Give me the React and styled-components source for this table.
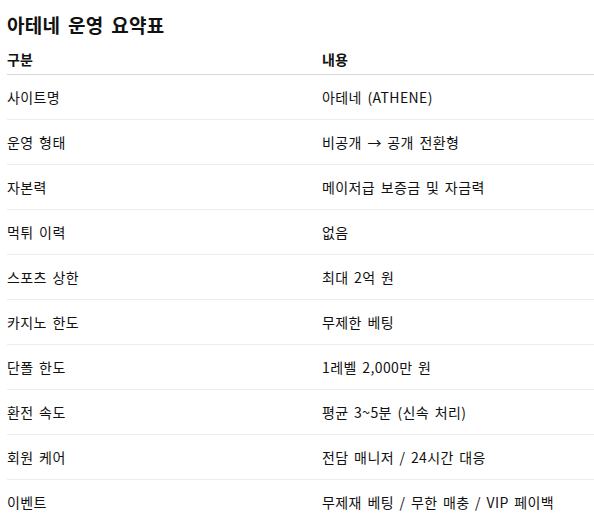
import React from 'react';
import styled, { createGlobalStyle } from 'styled-components';

const GlobalStyle = createGlobalStyle`
	body {
		margin: 0;
		background: #ffffff;
		color: #111111;
		font-family: 'Noto Sans CJK KR', 'Noto Sans', sans-serif;
		overflow: hidden;
	}
`;

const Page = styled.div`
	padding-left: 7px;
	width: 600px;
`;

const Title = styled.h2`
	margin: 13px 0 7px;
	font-size: 19px;
	line-height: 23px;
	font-weight: 700;
	letter-spacing: 0.3px;
	word-spacing: 3px;
`;

const Table = styled.div`
	display: grid;
	grid-template-columns: 315px 1fr;
`;

const HeadCell = styled.div`
	height: 31px;
	display: flex;
	align-items: center;
	font-size: 14px;
	font-weight: 700;
	border-bottom: 1px solid #d9d9d9;
`;

const Cell = styled.div`
	height: 44px;
	display: flex;
	align-items: center;
	font-size: 14px;
	line-height: 20px;
	letter-spacing: 0.4px;
	word-spacing: 2px;
	white-space: pre;
	border-bottom: 1px solid ${p => (p.$last ? 'transparent' : '#ececec')};
`;

const rows = [
	['사이트명', '아테네 (ATHENE)'],
	['운영 형태', '비공개 → 공개 전환형'],
	['자본력', '메이저급 보증금 및 자금력'],
	['먹튀 이력', '없음'],
	['스포츠 상한', '최대 2억 원'],
	['카지노 한도', '무제한 베팅'],
	['단폴 한도', '1레벨 2,000만 원'],
	['환전 속도', '평균 3~5분 (신속 처리)'],
	['회원 케어', '전담 매니저 / 24시간 대응'],
	['이벤트', '무제재 베팅 / 무한 매충 / VIP 페이백']
];

const App = () => (
	<Page>
		<GlobalStyle />
		<Title>아테네 운영 요약표</Title>
		<Table>
			<HeadCell>구분</HeadCell>
			<HeadCell>내용</HeadCell>
			{rows.map(([k, v], i) => (
				<React.Fragment key={k}>
					<Cell $last={i === rows.length - 1}>{k}</Cell>
					<Cell $last={i === rows.length - 1}>{v}</Cell>
				</React.Fragment>
			))}
		</Table>
	</Page>
);

export default App;
